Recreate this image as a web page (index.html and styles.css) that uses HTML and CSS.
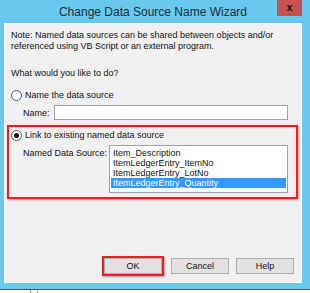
FILE: index.html
```html
<!DOCTYPE html>
<html lang="en">
<head>
    <meta charset="UTF-8">
    <title>Change Data Source Name Wizard</title>
    <link rel="stylesheet" href="styles.css">
</head>
<body>

<div class="window">
    <!-- Title bar -->
    <div class="titlebar">
        <span></span>
        <span class="title">Change Data Source Name Wizard</span>
        <span class="close-button">x</span>
    </div>

    <!-- Dialog body -->
    <div class="client">
        <p class="note">Note: Named data sources can be shared between objects and/or<br>referenced using VB Script or an external program.</p>
        <p class="question">What would you like to do?</p>

        <div class="option">
            <label class="radio-row"><span class="radio"></span>Name the data source</label>
            <div class="field-row name-row">
                <span class="field-label">Name:</span>
                <span class="textbox"></span>
            </div>
        </div>

        <div class="option highlight">
            <label class="radio-row"><span class="radio checked"></span>Link to existing named data source</label>
            <div class="field-row list-row">
                <span class="field-label">Named Data Source:</span>
                <div class="listbox">
                    <div class="list-item">Item_Description</div>
                    <div class="list-item">ItemLedgerEntry_ItemNo</div>
                    <div class="list-item">ItemLedgerEntry_LotNo</div>
                    <div class="list-item selected">ItemLedgerEntry_Quantity</div>
                </div>
            </div>
        </div>

        <div class="buttons">
            <span class="btn-mark"><button>OK</button></span>
            <button>Cancel</button>
            <button>Help</button>
        </div>
    </div>
</div>

<div class="taskbar"><span class="tab"></span></div>

</body>
</html>
```

FILE: styles.css
```css
/* Basic styling */
body {
    margin: 0;
    background: #fff;
    font-family: "Liberation Sans", Arial, sans-serif;
    font-size: 9px;
    color: #111;
}
.window {
    width: 310px;
    height: 289px;
    box-sizing: border-box;
    padding: 0 8px 6px 4px;
    background: #69c9ec;
    display: flex;
    flex-direction: column;
}
.titlebar {
    height: 23px;
    display: grid;
    grid-template-columns: 1fr auto 1fr;
    align-items: start;
}
.title {
    font-family: "Liberation Sans", Arial, sans-serif;
    font-size: 12px;
    color: #1b2b3a;
    line-height: 24px;
}
.close-button {
    justify-self: end;
    width: 25px;
    height: 16px;
    background: #c75050;
    color: #111;
    font-weight: bold;
    font-size: 10px;
    text-align: center;
    line-height: 15px;
}
.client {
    flex: 1;
    background: #f0f0f0;
    border: 1px solid #fafafa;
    padding: 6px 6px 0 6px;
    display: flex;
    flex-direction: column;
}
.note, .question {
    margin: 0;
    line-height: 11px;
}
.question {
    margin-top: 16px;
}
.option {
    display: flex;
    flex-direction: column;
}
.radio-row {
    display: flex;
    align-items: center;
    gap: 3px;
    line-height: 11px;
}
.radio {
    width: 9px;
    height: 9px;
    border: 1px solid #555;
    border-radius: 50%;
    background: #fff;
    display: flex;
    align-items: center;
    justify-content: center;
}
.radio.checked::after {
    content: "";
    width: 5px;
    height: 5px;
    border-radius: 50%;
    background: #111;
}
.option:first-of-type {
    margin-top: 11px;
}
.field-row {
    display: flex;
    padding-left: 12px;
    white-space: nowrap;
}
.field-label {
    width: 31px;
}
.name-row {
    margin-top: 4px;
    align-items: center;
}
.textbox {
    width: 232px;
    height: 13px;
    background: #fff;
    border: 1px solid #a0a0a0;
}
.highlight {
    margin: 5px -3px 0 -4px;
    padding: 3px 0 4px 2px;
    border: 2px solid #ee1c24;
    box-shadow: 1px 1px 2px rgba(0, 0, 0, 0.35);
}
.list-row {
    margin-top: 4px;
}
.list-row .field-label {
    width: 86px;
    margin-top: 3px;
}
.listbox {
    width: 175px;
    height: 44px;
    background: #fff;
    border: 1px solid #a0a0a0;
    padding: 2px 1px 0;
    box-sizing: content-box;
}
.list-item {
    line-height: 10px;
    padding-left: 2px;
    font-size: 9px;
}
.list-item.selected {
    background: #3399ff;
    color: #fff;
}
.buttons {
    margin-top: auto;
    margin-bottom: 6px;
    display: flex;
    justify-content: flex-end;
    align-items: center;
    gap: 7px;
    padding-right: 1px;
}
.buttons button {
    width: 58px;
    height: 16px;
    padding: 0;
    background: #e1e1e1;
    border: 1px solid #adadad;
    font-family: inherit;
    font-size: 9px;
    color: #111;
}
.btn-mark {
    border: 2px solid #ee1c24;
    box-shadow: 1px 1px 2px rgba(0, 0, 0, 0.35);
    display: flex;
}
.taskbar {
    border-top: 1px solid #555;
    height: 3px;
    padding-left: 30px;
}
.tab {
    display: block;
    width: 6px;
    height: 3px;
    border: 1px solid #999;
    border-top: 0;
}
```
